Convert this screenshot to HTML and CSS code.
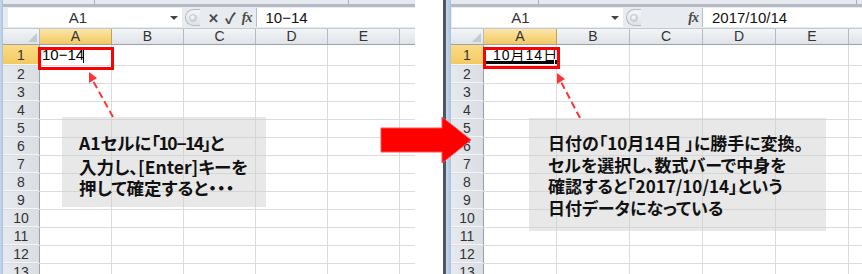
FILE: index.html
```html
<!DOCTYPE html>
<html lang="ja">
<head>
<meta charset="utf-8">
<title>日付に変換される入力</title>
<link rel="stylesheet" href="styles.css">
</head>
<body>
<div class="page">

	<!-- before: typing 10-14 -->
	<div class="sheet sheet-left">
		<div class="edge"></div>
		<div class="main">
			<div class="ribbon"><span class="rb" style="width:91px"></span><span class="rb" style="width:253px"></span></div>
			<div class="fbar">
				<div class="namebox"><span class="nb-text">A1</span><i class="dd"></i></div>
				<div class="grip"><i></i></div>
				<div class="fbtns"><span class="x">✕</span><span class="ok">✓</span><span class="fx">fx</span></div>
				<div class="finput">10−14</div>
			</div>
			<div class="band"></div>
			<div class="colhdr">
				<div class="corner"><i></i></div>
				<div class="ch sel">A</div><div class="ch">B</div><div class="ch">C</div><div class="ch">D</div><div class="ch">E</div><div class="ch rest"></div>
			</div>
			<div class="row first"><div class="rh sel">1</div><div class="cells"><span class="a1 editing">10−14</span><i class="caret"></i></div></div>
			<div class="row"><div class="rh">2</div><div class="cells"></div></div>
			<div class="row"><div class="rh">3</div><div class="cells"></div></div>
			<div class="row"><div class="rh">4</div><div class="cells"></div></div>
			<div class="row"><div class="rh">5</div><div class="cells"></div></div>
			<div class="row"><div class="rh">6</div><div class="cells"></div></div>
			<div class="row"><div class="rh">7</div><div class="cells"></div></div>
			<div class="row"><div class="rh">8</div><div class="cells"></div></div>
			<div class="row"><div class="rh">9</div><div class="cells"></div></div>
			<div class="row"><div class="rh">10</div><div class="cells"></div></div>
			<div class="row"><div class="rh">11</div><div class="cells"></div></div>
			<div class="row"><div class="rh">12</div><div class="cells"></div></div>
			<div class="row"><div class="rh">13</div><div class="cells"></div></div>
		</div>
		<div class="hilite hl-left"></div>
		<svg class="marks" width="415" height="274" viewBox="0 0 415 274">
			<line x1="113" y1="117" x2="92" y2="79" stroke="#ff3333" stroke-width="2" stroke-dasharray="7 4"/>
			<polygon points="89,72 97,78 89,83" fill="#ff3333"/>
		</svg>
		<div class="callout co-left">A1セルに<span class="tight">「10<span class="dash">−</span>14」</span>と<br>入力し、[Enter]キーを<br>押して確定すると・・・</div>
	</div>

	<!-- after: shown as a date -->
	<div class="sheet sheet-right">
		<div class="edge"></div>
		<div class="main">
			<div class="ribbon"><span class="rb" style="width:87px"></span><span class="rb" style="width:317px"></span></div>
			<div class="fbar">
				<div class="namebox"><span class="nb-text">A1</span><i class="dd"></i></div>
				<div class="grip"><i></i></div>
				<div class="fbtns"><span class="fx">fx</span></div>
				<div class="finput">2017/10/14</div>
			</div>
			<div class="band"></div>
			<div class="colhdr">
				<div class="corner"><i></i></div>
				<div class="ch sel">A</div><div class="ch">B</div><div class="ch">C</div><div class="ch">D</div><div class="ch">E</div><div class="ch rest"></div>
			</div>
			<div class="row first"><div class="rh sel">1</div><div class="cells"><span class="a1 date">10月14日</span><i class="selbar"></i><i class="handle"></i></div></div>
			<div class="row"><div class="rh">2</div><div class="cells"></div></div>
			<div class="row"><div class="rh">3</div><div class="cells"></div></div>
			<div class="row"><div class="rh">4</div><div class="cells"></div></div>
			<div class="row"><div class="rh">5</div><div class="cells"></div></div>
			<div class="row"><div class="rh">6</div><div class="cells"></div></div>
			<div class="row"><div class="rh">7</div><div class="cells"></div></div>
			<div class="row"><div class="rh">8</div><div class="cells"></div></div>
			<div class="row"><div class="rh">9</div><div class="cells"></div></div>
			<div class="row"><div class="rh">10</div><div class="cells"></div></div>
			<div class="row"><div class="rh">11</div><div class="cells"></div></div>
			<div class="row"><div class="rh">12</div><div class="cells"></div></div>
			<div class="row"><div class="rh">13</div><div class="cells"></div></div>
		</div>
		<div class="hilite hl-right"></div>
		<svg class="marks" width="419" height="274" viewBox="0 0 419 274">
			<line x1="137" y1="118" x2="117" y2="80" stroke="#ff3333" stroke-width="2" stroke-dasharray="7 4"/>
			<polygon points="114,73 122,79 114,84" fill="#ff3333"/>
		</svg>
		<div class="callout co-right">日付の「10月14日 」に勝手に変換。<br>セルを選択し、数式バーで中身を<br>確認すると「2017/10/14」という<br>日付データになっている</div>
	</div>

	<svg class="big-arrow" width="96" height="52" viewBox="0 0 96 52">
		<polygon points="3,14 64,14 64,3 93,26 64,49 64,38 3,38" fill="#ff0000" stroke="#ff5050" stroke-width="1"/>
	</svg>
</div>
</body>
</html>
```

FILE: styles.css
```css
body {
    margin: 0;
    background: #ffffff;
}
.page {
    position: relative;
    display: flex;
    gap: 28px;
    width: 862px;
    height: 274px;
    overflow: hidden;
    font-family: "Noto Sans CJK JP", "Liberation Sans", sans-serif;
    color: #333;
}

/* one excel window */
.sheet {
    position: relative;
    display: flex;
    height: 274px;
    overflow: hidden;
}
.sheet-left {
    width: 415px;
    --rh: 37px;
    --cw: 72px;
}
.sheet-right {
    flex: 1;
    --rh: 33px;
    --cw: 73px;
}
.edge {
    width: 3px;
    background: linear-gradient(90deg, #c9d9ec, #a9c1de);
}
.sheet-right .edge {
    width: 5px;
    border-left: 3px solid #4e565f;
}
.main {
    flex: 1;
    display: flex;
    flex-direction: column;
    min-width: 0;
    font-family: "Liberation Sans", "Noto Sans CJK JP", sans-serif;
}

.ribbon {
    display: flex;
    height: 7px;
    box-sizing: border-box;
    background: #e6e9ee;
    border-bottom: 3px solid #b3bac3;
}
.rb {
    height: 4px;
    border-right: 1px solid #a9b0b9;
}

.fbar {
    display: flex;
    align-items: stretch;
    height: 21px;
    background: #e8ebef;
}
.namebox {
    display: flex;
    align-items: center;
    margin: 1px 0 1px 5px;
    width: 174px;
    background: #fff;
    font-size: 15px;
}
.sheet-right .namebox {
    margin-left: 1px;
    width: 171px;
}
.nb-text {
    flex: 1;
    text-align: center;
    padding-right: 22px;
}
.dd {
    width: 0;
    height: 0;
    margin-right: 4px;
    border-left: 4px solid transparent;
    border-right: 4px solid transparent;
    border-top: 4px solid #444;
}
.grip {
    display: flex;
    align-items: center;
    width: 14px;
    margin: 2px 0 2px 3px;
    border: 1px solid #b5bcc5;
    border-right: none;
    border-radius: 9px 0 0 9px;
    background: linear-gradient(#f4f5f7, #dfe3e8);
}
.grip i {
    width: 6px;
    height: 6px;
    margin-left: 3px;
    border-radius: 50%;
    background: radial-gradient(circle at 40% 35%, #fff, #b9c0c8);
    border: 1px solid #c3c9d0;
}
.fbtns {
    display: flex;
    align-items: center;
    gap: 6px;
    padding: 0 4px 0 8px;
    color: #4a4a4a;
    font-family: "Noto Sans CJK JP", sans-serif;
}
.sheet-right .fbtns {
    flex: 1;
    justify-content: flex-end;
}
.fbtns .x {
    font-size: 13px;
    font-weight: bold;
}
.fbtns .ok {
    font-size: 15px;
    font-weight: bold;
}
.fbtns .fx {
    font-family: "Liberation Serif", serif;
    font-style: italic;
    font-weight: bold;
    font-size: 14px;
    letter-spacing: -1px;
}
.finput {
    flex: 1;
    margin: 1px 0;
    padding-left: 9px;
    background: #fff;
    border-left: 1px solid #b7bec7;
    font-size: 15px;
    line-height: 19px;
    color: #111;
}
.sheet-right .finput {
    flex: 0 0 150px;
}

.band {
    height: 3px;
    background: #dde1e6;
}

.colhdr {
    display: flex;
    height: 17px;
    box-sizing: border-box;
    border-top: 1px solid #c4cad1;
    border-bottom: 1px solid #9aa2ac;
    background: linear-gradient(#f3f5f7, #dfe3e8);
    font-size: 14px;
    line-height: 15px;
}
.corner {
    position: relative;
    width: var(--rh);
    box-sizing: border-box;
    border-right: 1px solid #b3bac3;
}
.corner i {
    position: absolute;
    right: 2px;
    bottom: 2px;
    border-left: 9px solid transparent;
    border-bottom: 9px solid #c4cad2;
}
.ch {
    width: var(--cw);
    box-sizing: border-box;
    border-right: 1px solid #b3bac3;
    text-align: center;
}
.ch.sel {
    background: linear-gradient(#fbe6a8, #f3c863);
    border-right-color: #c9a24f;
}
.ch.rest {
    flex: 1;
    border-right: none;
}

.row {
    display: flex;
    height: 18px;
    box-sizing: border-box;
    border-bottom: 1px solid #dadcdd;
}
.row.first {
    height: 21px;
}
.rh {
    width: var(--rh);
    box-sizing: border-box;
    border-right: 1px solid #9aa2ac;
    box-shadow: inset 0 -1px #f4f5f7;
    background: linear-gradient(90deg, #e6e9ed, #dadee3);
    text-align: center;
    font-size: 14px;
    line-height: 17px;
}
.row.first .rh {
    line-height: 20px;
}
.rh.sel {
    background: linear-gradient(#f9dc86, #f3c95f);
}
.cells {
    position: relative;
    flex: 1;
    background-image: repeating-linear-gradient(90deg, transparent 0 calc(var(--cw) - 1px), #dadcdd calc(var(--cw) - 1px) var(--cw));
}

.a1 {
    position: absolute;
    top: 0;
    font-size: 15px;
    line-height: 20px;
    color: #000;
}
.a1.editing {
    left: 2px;
}
.caret {
    position: absolute;
    left: 43px;
    top: 2px;
    width: 1px;
    height: 16px;
    background: #000;
}
.a1.date {
    left: 9px;
    font-size: 14px;
    letter-spacing: 1px;
}
.selbar {
    position: absolute;
    left: 2px;
    width: 70px;
    bottom: 1px;
    height: 3px;
    background: #000;
}
.handle {
    position: absolute;
    left: 70px;
    bottom: 0;
    width: 4px;
    height: 4px;
    background: #000;
    border: 1px solid #fff;
}

/* annotations drawn over the sheets */
.hilite {
    position: absolute;
    top: 47px;
    height: 23px;
    box-sizing: border-box;
    border: 3px solid #ff0000;
}
.hl-left {
    left: 38px;
    width: 76px;
}
.hl-right {
    left: 40px;
    width: 77px;
    height: 22px;
}
.marks {
    position: absolute;
    left: 0;
    top: 0;
}
.callout {
    position: absolute;
    box-sizing: border-box;
    background: rgba(205, 205, 205, 0.45);
    color: #111;
    font-size: 17.5px;
    line-height: 21.5px;
    font-weight: 700;
    font-feature-settings: "palt";
    white-space: nowrap;
}
.tight {
    letter-spacing: -1.5px;
}
.dash {
    font-family: "Liberation Sans", sans-serif;
}
.co-left {
    left: 62px;
    top: 117px;
    width: 204px;
    height: 90px;
    padding: 15px 0 0 17px;
}
.co-right {
    left: 86px;
    top: 118px;
    width: 297px;
    height: 113px;
    padding: 14px 0 0 19px;
    font-size: 17px;
}
.big-arrow {
    position: absolute;
    left: 378px;
    top: 114px;
}
```
